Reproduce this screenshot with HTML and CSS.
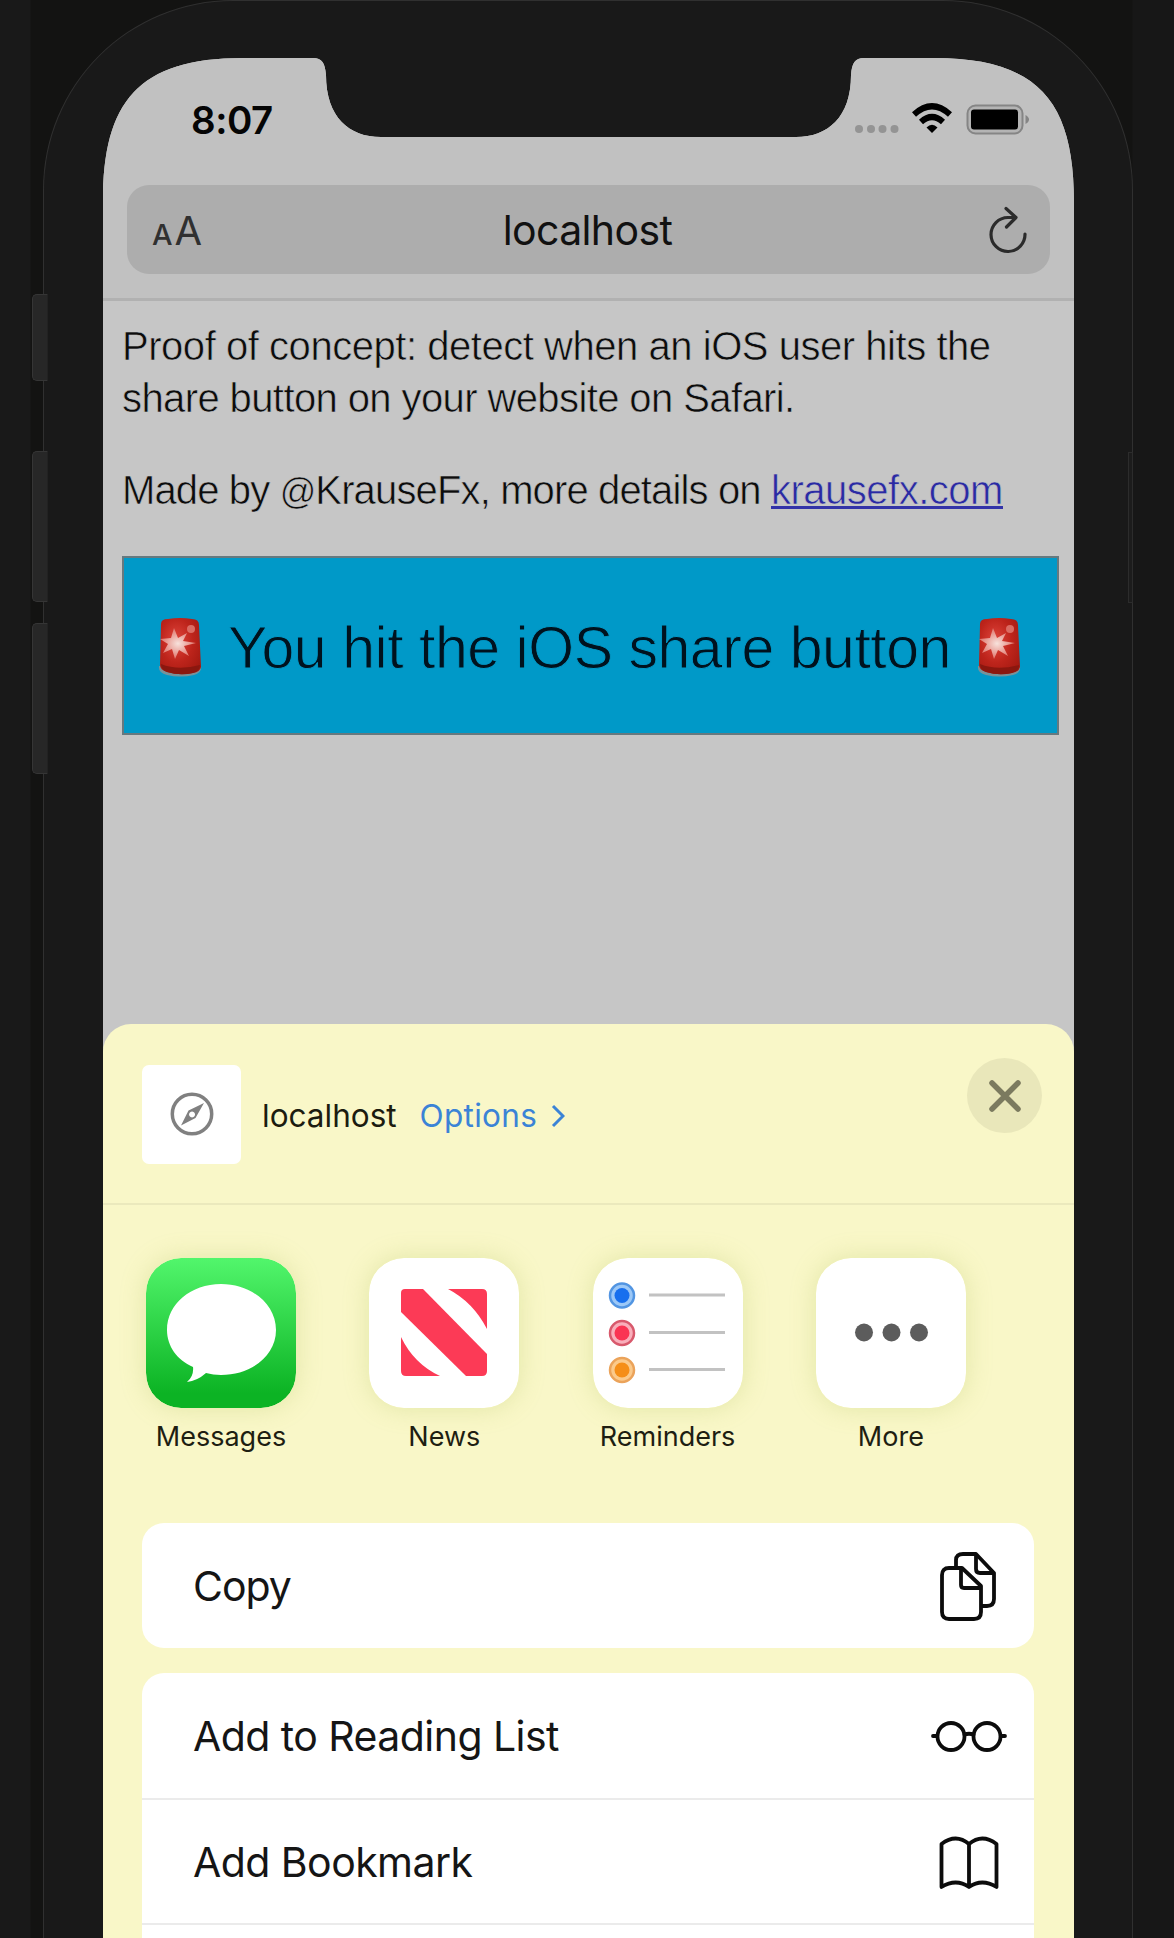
FILE: index.html
```
<!DOCTYPE html>
<html lang="en">
<head>
<meta charset="utf-8">
<title>localhost</title>
<link rel="stylesheet" href="styles.css">
</head>
<body>
<div class="phone">
  <span class="side-button mute"></span>
  <span class="side-button volume-up"></span>
  <span class="side-button volume-down"></span>
  <span class="power-button"></span>
  <div class="screen">
    <header class="toolbar">
      <div class="status-bar">
        <span class="clock">8:07</span>
        <div class="indicators">
          <svg class="signal" viewBox="0 0 44 8"><g fill="#949494"><circle cx="4" cy="4" r="4"/><circle cx="16" cy="4" r="4"/><circle cx="27.500" cy="4" r="4"/><circle cx="39.500" cy="4" r="4"/></g></svg>
          <svg class="wifi" viewBox="0 0 40 30"><g fill="none" stroke="#000" stroke-width="6"><path d="M2 11.500Q20-5 38 11.500"/><path d="M9 19Q20 9 31 19"/></g><path d="M14.500 24.500Q20 19 25.500 24.500L20 30Z" fill="#000"/></svg>
          <svg class="battery" viewBox="0 0 64 32"><rect x="1.500" y="1.500" width="55" height="28" rx="8" fill="#b4b4b4" stroke="#858585" stroke-width="2"/><rect x="5" y="5.500" width="47" height="20" rx="3" fill="#000"/><path d="M59.500 11Q63 13 63 15.500T59.500 20Z" fill="#858585"/></svg>
        </div>
      </div>
      <div class="address">
        <span class="text-size"><span class="small-a">A</span><span class="large-a">A</span></span>
        <span class="host">localhost</span>
        <svg class="reload" viewBox="0 0 40 48"><g fill="none" stroke="#2b2b2b" stroke-width="3.200" stroke-linecap="round" stroke-linejoin="round"><path d="M27 11.500H20A17 17 0 1 0 37 28"/><path d="M18 2.500L28 11.500L18.500 21"/></g></svg>
      </div>
    </header>
    <main class="page">
      <p class="intro">Proof of concept: detect when an iOS user hits the<br><span class="second-line">share button on your website on Safari.</span></p>
      <p class="credit">Made by <span class="at">@</span>KrauseFx, more details on <a href="#">krausefx.com</a></p>
      <div class="alert">
        <svg class="siren" viewBox="0 0 44 60"><use href="#siren"/></svg>
        <span class="alert-text">You hit the iOS share button</span>
        <svg class="siren" viewBox="0 0 44 60"><use href="#siren"/></svg>
      </div>
    </main>
    <section class="sheet">
      <div class="sheet-head">
        <span class="thumb"><svg viewBox="0 0 44 44"><circle cx="22" cy="22" r="19.700" fill="none" stroke="#808080" stroke-width="3.500"/><path fill-rule="evenodd" fill="#808080" d="M34 11L25.500 26L11 33.500L18.500 18.500ZM22 19.500a3 3 0 1 0 .1 0Z"/></svg></span>
        <span class="title">localhost</span>
        <span class="options"><span>Options</span><svg viewBox="0 0 14 24"><path d="M2 2L12 12L2 22" fill="none" stroke="#3b83d6" stroke-width="3"/></svg></span>
        <button class="close" aria-label="Close"><svg viewBox="0 0 32 32"><path d="M3 3L29 29M29 3L3 29" stroke="#7b7a5f" stroke-width="5.500" stroke-linecap="round"/></svg></button>
      </div>
      <div class="apps">
        <div class="app"><svg class="app-icon" viewBox="0 0 150 150"><defs><linearGradient id="green" x1="0" y1="0" x2="0" y2="1"><stop offset="0" stop-color="#52f66c"/><stop offset=".9" stop-color="#0cb324"/></linearGradient></defs><rect width="150" height="150" rx="35" fill="url(#green)"/><path d="M75 26C105 26 130 46 130 72S105 117 75 117Q67 117 60 115Q51 123 41 124Q48 118 47 109C31 102 21 88 21 72C21 46 45 26 75 26Z" fill="#fff"/></svg><span>Messages</span></div>
        <div class="app"><svg class="app-icon" viewBox="0 0 150 150"><rect width="150" height="150" rx="35" fill="#fff"/><g fill="#fc3a56"><path d="M36 31H54L118 96V113Q118 118 113 118H97L32 54V35Q32 31 36 31Z"/><path d="M79 31H113Q118 31 118 36V71Q104 44 79 31Z"/><path d="M32 79V113Q32 118 37 118H71Q45 106 32 79Z"/></g></svg><span>News</span></div>
        <div class="app"><svg class="app-icon" viewBox="0 0 150 150"><rect width="150" height="150" rx="35" fill="#fff"/><g stroke="#c2c2c2" stroke-width="3"><path d="M56 37H132M56 74.500H132M56 111.500H132"/></g><circle cx="29" cy="37.500" r="12" fill="#9cc8f7" stroke="#5295e2" stroke-width="2.500"/><circle cx="29" cy="37.500" r="7.500" fill="#176fee"/><circle cx="29" cy="75" r="12" fill="#f9afbb" stroke="#d8596c" stroke-width="2.500"/><circle cx="29" cy="75" r="7.500" fill="#fa3453"/><circle cx="29" cy="112" r="12" fill="#fbca8b" stroke="#eba35a" stroke-width="2.500"/><circle cx="29" cy="112" r="7.500" fill="#f58e18"/></svg><span>Reminders</span></div>
        <div class="app"><svg class="app-icon" viewBox="0 0 150 150"><rect width="150" height="150" rx="35" fill="#fff"/><g fill="#5c5c5c"><circle cx="48" cy="74.500" r="9"/><circle cx="75.500" cy="74.500" r="9"/><circle cx="103" cy="74.500" r="9"/></g></svg><span>More</span></div>
      </div>
      <div class="card">
        <div class="row"><span class="copy">Copy</span><svg width="76" height="70" viewBox="0 0 76 70"><g fill="#fff" stroke="#0c0c0c" stroke-width="3.800" stroke-linejoin="round"><path d="M32 3H45L63 22V48Q63 55 56 55H25V9Q25 3 32 3Z"/><path d="M45 3V18Q45 22 49 22H63" fill="none"/><path d="M18 17H31L50 35V61Q50 68 43 68H18Q11 68 11 61V24Q11 17 18 17Z"/><path d="M30 17V34Q30 37 33 37H50" fill="none"/></g></svg></div>
      </div>
      <div class="card">
        <div class="row"><span>Add to Reading List</span><svg width="76" height="34" viewBox="0 -1 76 34"><g fill="none" stroke="#0c0c0c" stroke-width="3.800" stroke-linecap="round"><circle cx="20" cy="16.500" r="13.500"/><circle cx="56" cy="16.500" r="13.500"/><path d="M2 16H6M70 16H74M33.500 14.500Q38 13 42.500 14.500"/></g></svg></div>
        <div class="row"><span>Add Bookmark</span><svg width="76" height="54" viewBox="0 -1 76 54"><path d="M38 8Q25-3 10.500 8V51Q25 42 38 51Q51 42 65.500 51V8Q51-3 38 8V51" fill="none" stroke="#0c0c0c" stroke-width="3.800" stroke-linejoin="round"/></svg></div>
        <div class="row"></div>
      </div>
    </section>
  </div>
</div>
<svg width="0" height="0" class="symbols"><defs>
  <radialGradient id="glow" cx=".4" cy=".4" r=".8"><stop offset="0" stop-color="#e0453c"/><stop offset=".5" stop-color="#bd241b"/><stop offset="1" stop-color="#9d170f"/></radialGradient>
  <radialGradient id="flare"><stop offset="0" stop-color="#f7e2dc"/><stop offset="1" stop-color="#e0756c"/></radialGradient>
  <symbol id="siren" viewBox="0 0 44 60"><path d="M1 49Q0 56 9 58Q22 61 36 58Q44 56 43 49Z" fill="#77929a"/><path d="M3 7Q3 2 10 2Q22 0 34 2Q41 2 41 8L43 50Q42 55 35 56Q22 59 9 55Q2 53 2 48Z" fill="url(#glow)"/><path d="M3 47Q20 54 42 48Q42 54 35 56Q22 59 9 55Q3 53 3 47Z" fill="#8a170f"/><path d="M16 11L20 21L29 16L25 24L38 26L26 29L31 39L21 33L17 42L14 32L5 36L10 27L2 22L13 21Z" fill="url(#flare)"/><circle cx="33" cy="12" r="4" fill="#da6c63"/></symbol>
</defs></svg>
</body>
</html>
```
FILE: styles.css
```
* { box-sizing: border-box; }
html, body { height: 1938px; overflow: hidden; }
body {
  margin: 0;
  background: linear-gradient(90deg, #191919 30px, #131312 31px 1132px, #171717 1133px);
  font-family: Inter, sans-serif;
  color: #111;
}
.phone {
  position: relative;
  width: 1090px;
  height: 1938px;
  margin-left: 43px;
  padding: 56px 57px 0 59px;
  border: 1px solid #303030;
  border-bottom: 0;
  border-radius: 190px 190px 0 0;
  background: #191919;
}
.side-button, .power-button {
  position: absolute;
  left: -12px;
  width: 16px;
  height: 151px;
  border: 1px solid #353535;
  border-right-color: #222;
  border-radius: 5px 0 0 5px;
  background: #272727;
}
.mute { top: 293px; height: 87px; }
.volume-up { top: 450px; }
.volume-down { top: 622px; }
.power-button { left: auto; right: -1px; top: 451px; width: 5px; border-radius: 0; background: #1c1c1c; border-color: #2c2c2c; }
.screen {
  width: 971px;
  height: 1881px;
  overflow: hidden;
  background: #c6c6c6;
  clip-path: path("M0 1881V145C0 45 35 1 140 1H210C219 1 222 6 223 18C223 60 246 80 278 80H693C725 80 748 60 748 18C749 6 752 1 761 1H831C936 1 971 45 971 145V1881Z");
}
.toolbar {
  height: 244px;
  padding: 0 24px;
  border-bottom: 3px solid #b1b1b1;
  background: #c1c1c1;
}
.status-bar { display: flex; justify-content: space-between; height: 128px; padding: 43px 20px 0 64px; }
.clock { height: 40px; font-size: 38.500px; line-height: 40px; font-weight: 600; letter-spacing: -.5px; color: #050505; }
.indicators { display: flex; align-items: flex-start; }
.signal { width: 44px; height: 8px; margin: 25px 13px 0 0; }
.wifi { width: 40px; height: 30px; margin: 3px 14px 0 0; }
.battery { width: 64px; height: 32px; margin-top: 4px; }
.address {
  display: grid;
  grid-template-columns: 100px 1fr 100px;
  align-items: center;
  height: 89px;
  padding: 0 22px 0 25px;
  border-radius: 22px;
  background: #adadad;
}
.text-size { display: flex; align-items: baseline; gap: 2px; padding-top: 2px; color: #303030; }
.small-a { font-size: 29px; font-weight: 500; }
.large-a { font-size: 40px; }
.host { padding-right: 5px; text-align: center; font-size: 41px; letter-spacing: -.65px; }
.reload { width: 40px; height: 48px; justify-self: end; }
.page {
  height: 723px;
  padding: 19px 15px 0 19px;
  font-family: "Liberation Sans", sans-serif;
  font-size: 40px;
  line-height: 52px;
  color: #0c0c0c;
  white-space: nowrap;
  -webkit-text-stroke: .6px #c6c6c6;
}
.page p { height: 52px; margin: 0 0 40px; }
.page .intro { height: 104px; letter-spacing: -.46px; }
.second-line { letter-spacing: -.6px; }
.credit { letter-spacing: -.86px; }
.at { font-size: 36px; line-height: 1; }
.page a {
  color: #2a2aa4;
  letter-spacing: -.5px;
  text-decoration: none;
  background: linear-gradient(#3333a8, #3333a8) 0 38px / 100% 3px no-repeat;
}
.alert { display: flex; align-items: center; justify-content: space-between; height: 179px; padding: 2px 36px 0 34px; border: 2px solid #66797f; background: #0099c8; color: #00121e; -webkit-text-stroke: .9px #0099c8; }
.alert-text { padding-top: 3px; font-size: 59px; letter-spacing: -.46px; }
.siren { width: 44px; height: 60px; }
.sheet { height: 914px; border-radius: 28px 28px 0 0; background: #f9f7c8; }
.sheet-head { display: flex; height: 181px; padding: 41px 32px 0 39px; border-bottom: 2px solid #ebe9bd; }
.thumb { display: grid; place-items: center; width: 99px; height: 99px; margin-right: 21px; padding: 0 0 2px 1px; border-radius: 7px; background: #fff; }
.thumb svg { width: 44px; height: 44px; }
.title, .options { font-size: 31.500px; line-height: 101px; }
.title { margin-right: 23px; color: #1c1c10; }
.options { display: flex; align-items: center; gap: 14px; height: 101px; color: #3b83d6; }
.options > span { letter-spacing: .3px; }
.options svg { width: 14px; height: 24px; }
.close { display: grid; place-items: center; width: 75px; height: 75px; margin: -7px 0 0 auto; padding: 0; border: 0; border-radius: 50%; background: #e9e7ba; }
.close svg { width: 32px; height: 32px; }
.apps { display: flex; gap: 73.300px; height: 318px; padding: 53px 0 0 43px; }
.app { display: flex; flex-direction: column; align-items: center; width: 150px; font-size: 27px; line-height: 34px; color: #1e1e12; }
.app-icon { width: 150px; height: 150px; margin-bottom: 12px; border-radius: 35px; box-shadow: 0 0 26px rgba(170, 190, 80, .28); }
.card { margin: 0 40px 25px 39px; border-radius: 22px; background: #fff; overflow: hidden; }
.row { display: flex; align-items: center; justify-content: space-between; height: 125px; padding: 0 27px 0 51px; font-size: 41px; letter-spacing: -.55px; color: #151515; }
.row + .row { border-top: 2px solid #ebebeb; }
.copy { letter-spacing: -1px; }
.symbols { position: absolute; }
```
